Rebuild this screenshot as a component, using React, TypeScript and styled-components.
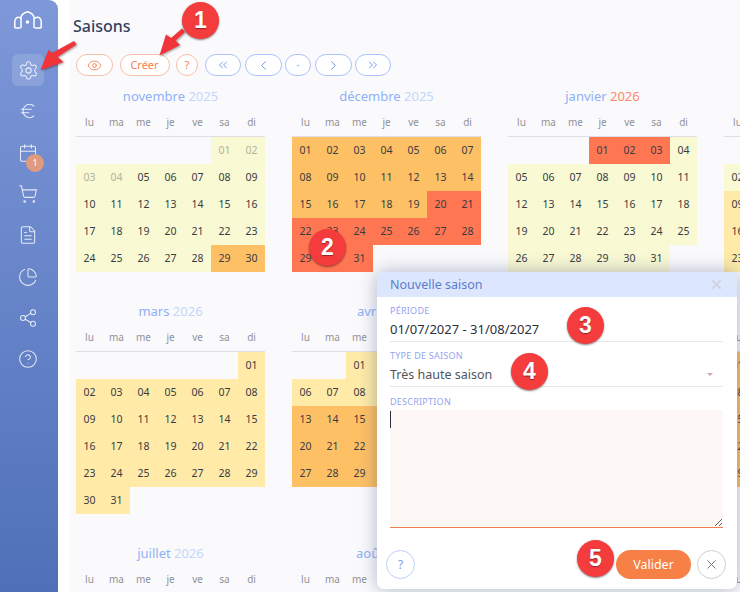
import React from "react";
import styled, { createGlobalStyle } from "styled-components";
import {
  Settings, Euro, Calendar, ShoppingCart, FileText, ChartPie, Share2, CircleHelp,
  Eye, ChevronsLeft, ChevronLeft, ChevronRight, ChevronsRight, X,
} from "lucide-react";

const Global = createGlobalStyle`
  html, body { margin: 0; padding: 0; background: #fff; }
  body { font-family: "Noto Sans", "Open Sans", sans-serif; }
  * { box-sizing: border-box; }
`;

const Page = styled.div`
  position: relative;
  width: 740px;
  height: 592px;
  overflow: hidden;
  display: flex;
  background: #fff;
`;

const Sidebar = styled.nav`
  flex: 0 0 58px;
  height: 592px;
  border-top-right-radius: 9px;
  background: linear-gradient(180deg, #7e98d9 0%, #4f70b8 100%);
  display: flex;
  flex-direction: column;
  align-items: center;
  padding: 11px 2px 0 0;
`;

const Logo = styled.svg`
  width: 28px;
  height: 18px;
  margin-bottom: 25px;
  display: block;
`;

const NavList = styled.div`
  display: flex;
  flex-direction: column;
  gap: 9.33px;
`;

const NavItem = styled.div<{ $active?: boolean }>`
  position: relative;
  width: 32px;
  height: 32px;
  border-radius: 6px;
  display: flex;
  align-items: center;
  justify-content: center;
  color: rgba(255, 255, 255, 0.82);
  background: ${(p) => (p.$active ? "rgba(255,255,255,0.14)" : "transparent")};
`;

const NavBadge = styled.span`
  position: absolute;
  left: 14px;
  top: 17px;
  width: 18px;
  height: 18px;
  border-radius: 50%;
  background: #e19a80;
  color: #fff;
  font-size: 9px;
  line-height: 18px;
  text-align: center;
`;

const Content = styled.main`
  flex: 1;
  margin-left: 12px;
  padding: 16px 0 0 3px;
  background: #fafafc;
  min-width: 0;
`;

const Title = styled.h1`
  margin: 0 0 18px;
  font-size: 16px;
  line-height: 20px;
  font-weight: 500;
  color: #36425f;
`;

const Toolbar = styled.div`
  display: flex;
  gap: 7px;
  margin: 0 0 10px 3px;
`;

const ToolGroup = styled.div<{ $gap: number }>`
  display: flex;
  gap: ${(p) => p.$gap}px;
`;

const Pill = styled.button<{ $tone: "orange" | "blue"; $w: number }>`
  width: ${(p) => p.$w}px;
  height: 22px;
  padding: 0;
  border-radius: 11px;
  background: #fff;
  border: 1px solid ${(p) => (p.$tone === "orange" ? "#f7bfa8" : "#abc4fa")};
  color: ${(p) => (p.$tone === "orange" ? "#f6804f" : "#6f93e6")};
  font-family: inherit;
  font-size: 11px;
  line-height: 20px;
  display: flex;
  align-items: center;
  justify-content: center;
`;

const Calendars = styled.div`
  display: grid;
  grid-template-columns: repeat(4, 189px);
  column-gap: 27px;
  row-gap: 29px;
  margin-left: 3px;
  align-items: start;
`;

const MonthTitle = styled.div`
  height: 20px;
  line-height: 20px;
  text-align: center;
  font-size: 13px;
  color: #8fb0f6;
  white-space: nowrap;
`;

const Year = styled.span<{ $hot?: boolean }>`
  color: ${(p) => (p.$hot ? "#ff8a6b" : "#c4d6fb")};
`;

const Weekdays = styled.div`
  display: grid;
  grid-template-columns: repeat(7, 27px);
  height: 31px;
  border-bottom: 1px solid #dfe0e4;
  padding-top: 7px;
`;

const Weekday = styled.span`
  text-align: center;
  font-size: 10px;
  line-height: 18px;
  color: #8f9298;
`;

const Days = styled.div`
  display: grid;
  grid-template-columns: repeat(7, 27px);
  grid-auto-rows: 27px;
`;

type Tone = "pale" | "yellow" | "orange" | "red";
const toneBg: Record<Tone, string> = {
  pale: "#f9f9d3",
  yellow: "#ffeaa8",
  orange: "#fec065",
  red: "#ff7653",
};

const Day = styled.div<{ $tone: Tone; $past?: boolean }>`
  background: ${(p) => toneBg[p.$tone]};
  color: ${(p) => (p.$past ? "#b3b39a" : "#3a3c44")};
  font-size: 10.5px;
  line-height: 27px;
  text-align: center;
`;

const Blank = styled.div``;

const Modal = styled.section`
  position: absolute;
  left: 377px;
  top: 272px;
  width: 360px;
  height: 317px;
  background: #fff;
  border-radius: 7px;
  box-shadow: 0 0 18px rgba(50, 66, 110, 0.38);
  display: flex;
  flex-direction: column;
`;

const ModalHeader = styled.header`
  height: 25px;
  padding: 0 13px;
  background: #dce7fd;
  border-radius: 7px 7px 0 0;
  display: flex;
  align-items: center;
  justify-content: space-between;
  font-size: 12.5px;
  color: #5d7ccf;
`;

const ModalClose = styled.span`
  display: flex;
  color: #cdd2da;
`;

const ModalBody = styled.div`
  padding: 8px 14px 0 13px;
  display: flex;
  flex-direction: column;
`;

const Label = styled.div`
  font-size: 9px;
  line-height: 12px;
  color: #95a3f0;
  letter-spacing: 0.25px;
`;

const Field = styled.div<{ $mt: number }>`
  margin-top: ${(p) => p.$mt}px;
`;

const Value = styled.div<{ $muted?: boolean }>`
  height: 25px;
  line-height: 25px;
  padding-top: 1px;
  border-bottom: 1px solid #e6e7ea;
  font-size: ${(p) => (p.$muted ? 12.5 : 13)}px;
  color: ${(p) => (p.$muted ? "#50545e" : "#2c3040")};
  display: flex;
  justify-content: space-between;
  align-items: center;
`;

const Caret = styled.span`
  width: 0;
  height: 0;
  margin-right: 10px;
  border-left: 3.5px solid transparent;
  border-right: 3.5px solid transparent;
  border-top: 3.5px solid #c9aca4;
`;

const DescriptionBox = styled.div`
  position: relative;
  margin-top: 2px;
  height: 118px;
`;

const Description = styled.textarea`
  display: block;
  width: 100%;
  height: 118px;
  margin: 0;
  padding: 0;
  border: 0;
  border-bottom: 1px solid #f07f52;
  border-radius: 0;
  outline: none;
  background: #fdf8f5;
  resize: vertical;
`;

const TextCursor = styled.span`
  position: absolute;
  left: 0;
  top: 1px;
  width: 1px;
  height: 17px;
  background: #2c3040;
`;

const Footer = styled.footer`
  margin-top: auto;
  padding: 0 11px 10px 9px;
  display: flex;
  align-items: center;
`;

const RoundButton = styled.button<{ $tone: "blue" | "grey" }>`
  width: 29px;
  height: 29px;
  padding: 0;
  border-radius: 50%;
  background: #fff;
  border: 1px solid ${(p) => (p.$tone === "blue" ? "#bcd0fb" : "#cfcfd2")};
  color: ${(p) => (p.$tone === "blue" ? "#7f9fe6" : "#6d6f75")};
  font-family: inherit;
  font-size: 12px;
  display: flex;
  align-items: center;
  justify-content: center;
`;

const Submit = styled.button`
  margin-left: auto;
  margin-right: 6px;
  width: 75px;
  height: 29px;
  padding: 0;
  border: 0;
  border-radius: 15px;
  background: #f78046;
  color: #fff;
  font-family: inherit;
  font-size: 12.5px;
`;

const ArrowLayer = styled.svg`
  position: absolute;
  left: 0;
  top: 0;
  width: 740px;
  height: 592px;
  pointer-events: none;
  filter: drop-shadow(1px 1px 1px rgba(60, 20, 20, 0.45));
`;

const Marker = styled.div<{ $cx: number; $cy: number }>`
  position: absolute;
  left: ${(p) => p.$cx - 18.5}px;
  top: ${(p) => p.$cy - 18.5}px;
  width: 37px;
  height: 37px;
  border-radius: 50%;
  background: #f43c3c;
  box-shadow: 0 1px 2px rgba(40, 20, 20, 0.55);
  color: #fff;
  font-family: "Liberation Sans", Arial, sans-serif;
  font-weight: 700;
  font-size: 23px;
  line-height: 37px;
  text-align: center;
  text-shadow: 0 1px 1px rgba(0, 0, 0, 0.4);
`;

type MonthData = {
  name: string;
  year: number;
  offset: number;
  days: number;
  tone: (d: number) => Tone;
  past?: number;
  hot?: boolean;
};

const months: MonthData[] = [
  { name: "novembre", year: 2025, offset: 5, days: 30, past: 4, tone: (d) => (d >= 29 ? "orange" : "pale") },
  { name: "décembre", year: 2025, offset: 0, days: 31, tone: (d) => (d >= 20 ? "red" : "orange") },
  { name: "janvier", year: 2026, offset: 3, days: 31, hot: true, tone: (d) => (d <= 3 ? "red" : "pale") },
  { name: "février", year: 2026, offset: 6, days: 28, tone: (d) => (d <= 8 ? "pale" : "yellow") },
  { name: "mars", year: 2026, offset: 6, days: 31, tone: () => "yellow" },
  { name: "avril", year: 2026, offset: 2, days: 30, tone: (d) => (d <= 12 ? "yellow" : "orange") },
  { name: "mai", year: 2026, offset: 4, days: 31, tone: () => "orange" },
  { name: "juin", year: 2026, offset: 0, days: 30, tone: () => "orange" },
  { name: "juillet", year: 2026, offset: 2, days: 31, tone: () => "red" },
  { name: "août", year: 2026, offset: 5, days: 31, tone: () => "red" },
  { name: "septembre", year: 2026, offset: 1, days: 30, tone: () => "orange" },
  { name: "octobre", year: 2026, offset: 3, days: 31, tone: () => "yellow" },
];

const weekdays = ["lu", "ma", "me", "je", "ve", "sa", "di"];

function Month({ m }: { m: MonthData }) {
  return (
    <div>
      <MonthTitle>
        {m.name} <Year $hot={m.hot}>{m.year}</Year>
      </MonthTitle>
      <Weekdays>
        {weekdays.map((w) => (
          <Weekday key={w}>{w}</Weekday>
        ))}
      </Weekdays>
      <Days>
        {Array.from({ length: m.offset }, (_, i) => (
          <Blank key={"b" + i} />
        ))}
        {Array.from({ length: m.days }, (_, i) => {
          const d = i + 1;
          return (
            <Day key={d} $tone={m.tone(d)} $past={m.past !== undefined && d <= m.past}>
              {String(d).padStart(2, "0")}
            </Day>
          );
        })}
      </Days>
    </div>
  );
}

const iconProps = { size: 20, strokeWidth: 1.25 };

export default function App() {
  return (
    <Page>
      <Global />
      <Sidebar>
        <Logo viewBox="0 0 28 18" fill="none" stroke="#fff" strokeWidth="1.5">
          <path d="M7 17V6.8C7 3.6 10.5 1.8 13.5 .8C16.5 1.8 20 3.6 20 6.8V17" />
          <path d="M.8 17V10.5C.8 8 2.8 6.3 4.2 6.3C5.4 6.3 6.4 6.8 7 7.6" />
          <path d="M27.2 17V10.5C27.2 8 25.2 6.3 23.8 6.3C22.6 6.3 21.6 6.8 20 7.6" />
          <path d="M.8 17H6.4M20.6 17H27.2" />
          <circle cx="13.5" cy="11" r="1.8" fill="#fff" stroke="none" />
        </Logo>
        <NavList>
          <NavItem $active>
            <Settings size={21} strokeWidth={1.2} />
          </NavItem>
          <NavItem>
            <Euro {...iconProps} />
          </NavItem>
          <NavItem>
            <Calendar {...iconProps} />
            <NavBadge>1</NavBadge>
          </NavItem>
          <NavItem>
            <ShoppingCart {...iconProps} />
          </NavItem>
          <NavItem>
            <FileText {...iconProps} />
          </NavItem>
          <NavItem>
            <ChartPie {...iconProps} />
          </NavItem>
          <NavItem>
            <Share2 {...iconProps} />
          </NavItem>
          <NavItem>
            <CircleHelp {...iconProps} />
          </NavItem>
        </NavList>
      </Sidebar>

      <Content>
        <Title>Saisons</Title>
        <Toolbar>
          <ToolGroup $gap={6.5}>
            <Pill $tone="orange" $w={37}>
              <Eye size={15} strokeWidth={1.5} />
            </Pill>
            <Pill $tone="orange" $w={50}>Créer</Pill>
            <Pill $tone="orange" $w={22}>?</Pill>
          </ToolGroup>
          <ToolGroup $gap={3.5}>
            <Pill $tone="blue" $w={36}>
              <ChevronsLeft size={14} strokeWidth={1.6} />
            </Pill>
            <Pill $tone="blue" $w={37}>
              <ChevronLeft size={15} strokeWidth={1.6} />
            </Pill>
            <Pill $tone="blue" $w={26}>·</Pill>
            <Pill $tone="blue" $w={37}>
              <ChevronRight size={15} strokeWidth={1.6} />
            </Pill>
            <Pill $tone="blue" $w={36}>
              <ChevronsRight size={14} strokeWidth={1.6} />
            </Pill>
          </ToolGroup>
        </Toolbar>
        <Calendars>
          {months.map((m) => (
            <Month key={m.name} m={m} />
          ))}
        </Calendars>
      </Content>

      <Modal>
        <ModalHeader>
          Nouvelle saison
          <ModalClose>
            <X size={15} strokeWidth={2.6} />
          </ModalClose>
        </ModalHeader>
        <ModalBody>
          <Field $mt={0}>
            <Label>PÉRIODE</Label>
            <Value>01/07/2027 - 31/08/2027</Value>
          </Field>
          <Field $mt={8}>
            <Label>TYPE DE SAISON</Label>
            <Value $muted>
              Très haute saison
              <Caret />
            </Value>
          </Field>
          <Field $mt={9}>
            <Label>DESCRIPTION</Label>
            <DescriptionBox>
              <Description readOnly />
              <TextCursor />
            </DescriptionBox>
          </Field>
        </ModalBody>
        <Footer>
          <RoundButton $tone="blue">?</RoundButton>
          <Submit>Valider</Submit>
          <RoundButton $tone="grey">
            <X size={15} strokeWidth={1.5} />
          </RoundButton>
        </Footer>
      </Modal>

      <ArrowLayer viewBox="0 0 740 592">
        <polygon fill="#f0343a" points="159.5,55.5 180,45 175.5,40.5 185,32 182,28.5 171,38 166,34.5" />
        <polygon fill="#f0343a" points="40.5,70 63.5,62 57.5,57 76.5,44.5 74,41 52,53 48.5,50" />
      </ArrowLayer>
      <Marker $cx={200.5} $cy={20}>1</Marker>
      <Marker $cx={327.5} $cy={247.5}>2</Marker>
      <Marker $cx={585.5} $cy={325}>3</Marker>
      <Marker $cx={529.5} $cy={371}>4</Marker>
      <Marker $cx={595.5} $cy={558.5}>5</Marker>
    </Page>
  );
}
